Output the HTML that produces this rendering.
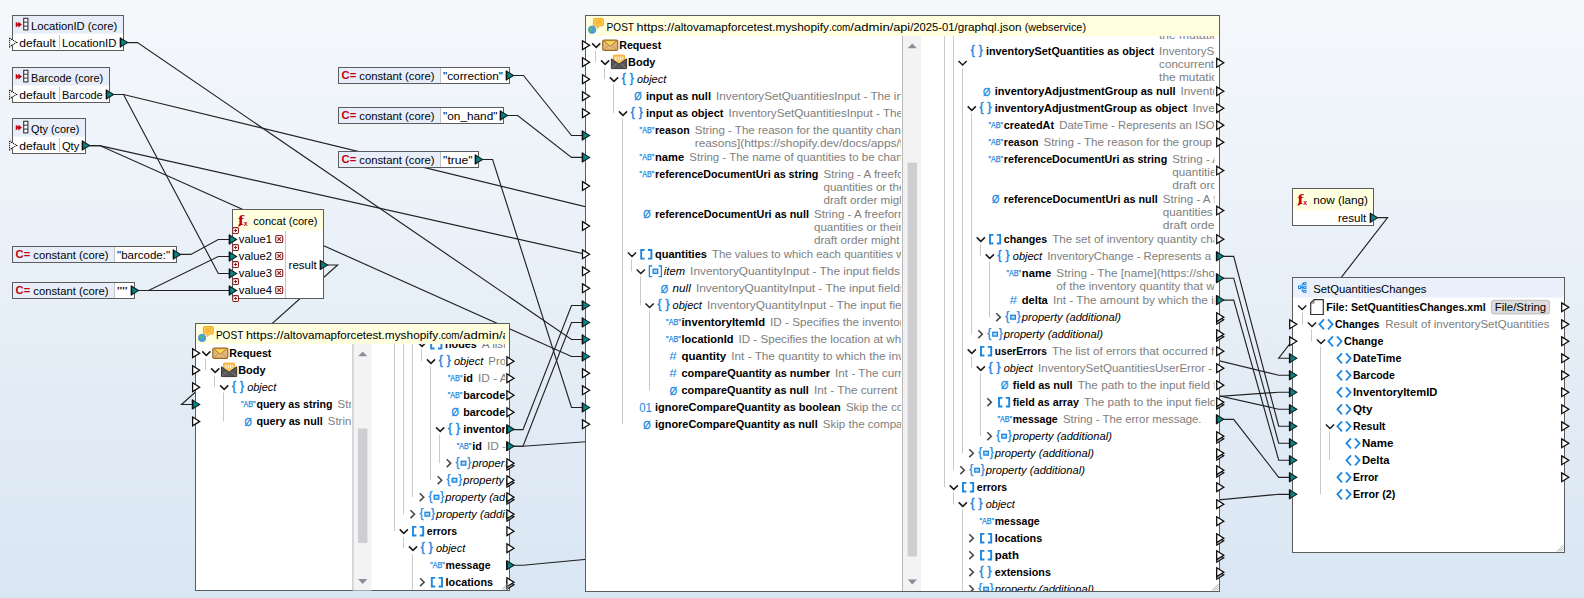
<!DOCTYPE html>
<html lang="en"><head><meta charset="utf-8"><title>MapForce mapping - SetQuantitiesChanges</title>
<style>html,body{margin:0;padding:0;background:#e6eef7;overflow:hidden}svg{display:block}svg{font-family:"Liberation Sans",Arial,sans-serif;font-size:11px}text{white-space:pre}.b{font-weight:bold}.i{font-style:italic}</style></head><body>
<svg width="1584" height="598" viewBox="0 0 1584 598">
<defs><linearGradient id="bg" x1="0" y1="0" x2="0" y2="1"><stop offset="0" stop-color="#f5f8fb"/><stop offset="1" stop-color="#d9e6f3"/></linearGradient>
<clipPath id="cMainL"><rect x="586" y="36" width="315" height="555"/></clipPath>
<clipPath id="cMainR"><rect x="921" y="36" width="293.4" height="555"/></clipPath>
<clipPath id="cMainR2"><rect x="921" y="36" width="298" height="555"/></clipPath>
<clipPath id="cW2L"><rect x="196" y="344" width="155" height="246"/></clipPath>
<clipPath id="cW2R"><rect x="371" y="344" width="134.2" height="246"/></clipPath>
<clipPath id="cW2T"><rect x="196" y="324" width="309" height="20"/></clipPath>
</defs>
<rect width="1584" height="598" fill="url(#bg)"/>
<g fill="none" stroke="#222" stroke-width="1.15">
<path d="M513.0 75.5H523.5L571.5 135.5H583.0"/>
<path d="M507.2 115.5H517.7L571.5 157.4H583.0"/>
<path d="M482.1 159.5H492.6L571.5 407.5H583.0"/>
<path d="M127.0 42.6H137.5L571.5 339.5H583.0"/>
<path d="M113.0 94.5H123.5L218.3 273.5H229.8"/>
<path d="M113.0 94.5H123.5L1278.7 375.2H1290.2"/>
<path d="M89.2 145.6H99.7L571.5 356.5H583.0"/>
<path d="M89.2 145.6H99.7L1278.7 409.2H1290.2"/>
<path d="M327.1 265.0H337.6L181.5 404.5H193.0"/>
<path d="M180.4 254.4H190.9L218.3 239.5H229.8"/>
<path d="M138.1 290.5H148.6L218.3 256.5H229.8"/>
<path d="M138.1 290.5H148.6L218.3 290.5H229.8"/>
<path d="M512.5 429.6H523.0L571.5 305.5H583.0"/>
<path d="M512.5 446.2H523.0L571.5 322.5H583.0"/>
<path d="M512.5 446.2H523.0L1278.7 392.2H1290.2"/>
<path d="M512.5 565.2H523.0L1278.7 494.3H1290.2"/>
<path d="M1377.1 217.6H1387.6L1278.7 358.2H1290.2"/>
<path d="M1223.2 256.3H1233.7L1278.7 426.2H1290.2"/>
<path d="M1223.2 278.2H1233.7L1278.7 443.2H1290.2"/>
<path d="M1223.2 300.1H1233.7L1278.7 460.2H1290.2"/>
<path d="M1223.2 419.3H1233.7L1278.7 477.3H1290.2"/>
</g>
<rect x="12.5" y="15.5" width="111" height="35" fill="#fff" stroke="#5c5c5c"/>
<rect x="13" y="16" width="110" height="17.6" fill="#e7eefa"/>
<path d="M59.5 35V49" stroke="#c4c4c4"/>
<path d="M16.1 22.2l2.7 2.4l-2.7 2.4zM18.6 22.2l2.9 2.4l-2.9 2.4z" fill="#c00010" stroke="#c00010" stroke-width="0.6"/>
<rect x="23.7" y="18.3" width="4.2" height="11.6" fill="#fff" stroke="#333" stroke-width="1.1"/>
<path d="M23.7 22.2h4.2M23.7 26.1h4.2" stroke="#333" stroke-width="1"/>
<text x="31.0" y="29.9" textLength="86.2" lengthAdjust="spacingAndGlyphs">LocationID (core)</text>
<path d="M9.6 38.1L16.7 42.4L9.6 46.7Z" fill="#fff" stroke="none"/>
<path d="M9.6 38.1L16.7 42.4L9.6 46.7V38.1" fill="none" stroke="#000" stroke-width="1.2" stroke-dasharray="1 1"/>
<text x="19.2" y="46.5" textLength="36.4" lengthAdjust="spacingAndGlyphs">default</text>
<text x="61.9" y="46.5" textLength="54.6" lengthAdjust="spacingAndGlyphs">LocationID</text>
<path d="M120.6 38.2L127.6 42.5L120.6 46.8Z" fill="#0a8585" stroke="#0c2424" stroke-width="1.1" stroke-linejoin="miter"/>
<path d="M120.4 37.7V47.3" stroke="#111" stroke-width="1.5"/>
<rect x="12.5" y="67.5" width="97" height="35" fill="#fff" stroke="#5c5c5c"/>
<rect x="13" y="68" width="96" height="17.6" fill="#e7eefa"/>
<path d="M59.5 87V101" stroke="#c4c4c4"/>
<path d="M16.1 74.2l2.7 2.4l-2.7 2.4zM18.6 74.2l2.9 2.4l-2.9 2.4z" fill="#c00010" stroke="#c00010" stroke-width="0.6"/>
<rect x="23.7" y="70.3" width="4.2" height="11.6" fill="#fff" stroke="#333" stroke-width="1.1"/>
<path d="M23.7 74.2h4.2M23.7 78.1h4.2" stroke="#333" stroke-width="1"/>
<text x="31.0" y="81.9" textLength="72.2" lengthAdjust="spacingAndGlyphs">Barcode (core)</text>
<path d="M9.6 90.1L16.7 94.4L9.6 98.7Z" fill="#fff" stroke="none"/>
<path d="M9.6 90.1L16.7 94.4L9.6 98.7V90.1" fill="none" stroke="#000" stroke-width="1.2" stroke-dasharray="1 1"/>
<text x="19.2" y="98.5" textLength="36.4" lengthAdjust="spacingAndGlyphs">default</text>
<text x="61.9" y="98.5" textLength="40.8" lengthAdjust="spacingAndGlyphs">Barcode</text>
<path d="M106.6 90.2L113.6 94.5L106.6 98.8Z" fill="#0a8585" stroke="#0c2424" stroke-width="1.1" stroke-linejoin="miter"/>
<path d="M106.4 89.7V99.3" stroke="#111" stroke-width="1.5"/>
<rect x="12.5" y="118.5" width="73" height="35" fill="#fff" stroke="#5c5c5c"/>
<rect x="13" y="119" width="72" height="17.6" fill="#e7eefa"/>
<path d="M59.5 138V152" stroke="#c4c4c4"/>
<path d="M16.1 125.2l2.7 2.4l-2.7 2.4zM18.6 125.2l2.9 2.4l-2.9 2.4z" fill="#c00010" stroke="#c00010" stroke-width="0.6"/>
<rect x="23.7" y="121.3" width="4.2" height="11.6" fill="#fff" stroke="#333" stroke-width="1.1"/>
<path d="M23.7 125.2h4.2M23.7 129.1h4.2" stroke="#333" stroke-width="1"/>
<text x="31.0" y="132.9" textLength="48.4" lengthAdjust="spacingAndGlyphs">Qty (core)</text>
<path d="M9.6 141.1L16.7 145.4L9.6 149.7Z" fill="#fff" stroke="none"/>
<path d="M9.6 141.1L16.7 145.4L9.6 149.7V141.1" fill="none" stroke="#000" stroke-width="1.2" stroke-dasharray="1 1"/>
<text x="19.2" y="149.5" textLength="36.4" lengthAdjust="spacingAndGlyphs">default</text>
<text x="61.9" y="149.5" textLength="17.4" lengthAdjust="spacingAndGlyphs">Qty</text>
<path d="M82.6 141.2L89.6 145.5L82.6 149.8Z" fill="#0a8585" stroke="#0c2424" stroke-width="1.1" stroke-linejoin="miter"/>
<path d="M82.4 140.7V150.3" stroke="#111" stroke-width="1.5"/>
<rect x="12.5" y="246.5" width="164" height="16" fill="#fff" stroke="#5c5c5c"/>
<rect x="13" y="247" width="101" height="15" fill="#e7eefa"/>
<path d="M114.5 247V262" stroke="#c4c4c4"/>
<text x="15.6" y="258.0" fill="#c00010" class="b" font-size="10.6" textLength="14.6" lengthAdjust="spacingAndGlyphs">C=</text>
<text x="33.3" y="258.6" textLength="75.2" lengthAdjust="spacingAndGlyphs">constant (core)</text>
<text x="117.1" y="258.6" textLength="52.9" lengthAdjust="spacingAndGlyphs">"barcode:"</text>
<path d="M173.6 250.2L180.6 254.5L173.6 258.8Z" fill="#0a8585" stroke="#0c2424" stroke-width="1.1" stroke-linejoin="miter"/>
<path d="M173.4 249.7V259.3" stroke="#111" stroke-width="1.5"/>
<rect x="12.5" y="282.5" width="122" height="16" fill="#fff" stroke="#5c5c5c"/>
<rect x="13" y="283" width="101" height="15" fill="#e7eefa"/>
<path d="M114.5 283V298" stroke="#c4c4c4"/>
<text x="15.6" y="294.0" fill="#c00010" class="b" font-size="10.6" textLength="14.6" lengthAdjust="spacingAndGlyphs">C=</text>
<text x="33.3" y="294.6" textLength="75.2" lengthAdjust="spacingAndGlyphs">constant (core)</text>
<text x="117.1" y="294.6" textLength="10.4" lengthAdjust="spacingAndGlyphs">""</text>
<path d="M131.6 286.2L138.6 290.5L131.6 294.8Z" fill="#0a8585" stroke="#0c2424" stroke-width="1.1" stroke-linejoin="miter"/>
<path d="M131.4 285.7V295.3" stroke="#111" stroke-width="1.5"/>
<rect x="338.5" y="67.5" width="171" height="16" fill="#fff" stroke="#5c5c5c"/>
<rect x="339" y="68" width="101" height="15" fill="#e7eefa"/>
<path d="M440.5 68V83" stroke="#c4c4c4"/>
<text x="341.6" y="79.0" fill="#c00010" class="b" font-size="10.6" textLength="14.6" lengthAdjust="spacingAndGlyphs">C=</text>
<text x="359.3" y="79.6" textLength="75.2" lengthAdjust="spacingAndGlyphs">constant (core)</text>
<text x="443.1" y="79.6" textLength="59.8" lengthAdjust="spacingAndGlyphs">"correction"</text>
<path d="M506.6 71.2L513.6 75.5L506.6 79.8Z" fill="#0a8585" stroke="#0c2424" stroke-width="1.1" stroke-linejoin="miter"/>
<path d="M506.4 70.7V80.3" stroke="#111" stroke-width="1.5"/>
<rect x="338.5" y="107.5" width="165" height="16" fill="#fff" stroke="#5c5c5c"/>
<rect x="339" y="108" width="101" height="15" fill="#e7eefa"/>
<path d="M440.5 108V123" stroke="#c4c4c4"/>
<text x="341.6" y="119.0" fill="#c00010" class="b" font-size="10.6" textLength="14.6" lengthAdjust="spacingAndGlyphs">C=</text>
<text x="359.3" y="119.6" textLength="75.2" lengthAdjust="spacingAndGlyphs">constant (core)</text>
<text x="443.1" y="119.6" textLength="54.3" lengthAdjust="spacingAndGlyphs">"on_hand"</text>
<path d="M500.6 111.2L507.6 115.5L500.6 119.8Z" fill="#0a8585" stroke="#0c2424" stroke-width="1.1" stroke-linejoin="miter"/>
<path d="M500.4 110.7V120.3" stroke="#111" stroke-width="1.5"/>
<rect x="338.5" y="151.5" width="140" height="16" fill="#fff" stroke="#5c5c5c"/>
<rect x="339" y="152" width="101" height="15" fill="#e7eefa"/>
<path d="M440.5 152V167" stroke="#c4c4c4"/>
<text x="341.6" y="163.0" fill="#c00010" class="b" font-size="10.6" textLength="14.6" lengthAdjust="spacingAndGlyphs">C=</text>
<text x="359.3" y="163.6" textLength="75.2" lengthAdjust="spacingAndGlyphs">constant (core)</text>
<text x="443.1" y="163.6" textLength="29.4" lengthAdjust="spacingAndGlyphs">"true"</text>
<path d="M475.6 155.2L482.6 159.5L475.6 163.8Z" fill="#0a8585" stroke="#0c2424" stroke-width="1.1" stroke-linejoin="miter"/>
<path d="M475.4 154.7V164.3" stroke="#111" stroke-width="1.5"/>
<rect x="232.5" y="209.5" width="91" height="89" fill="#fff" stroke="#5c5c5c"/>
<rect x="233" y="210" width="90" height="20.4" fill="#ffffdf"/>
<path d="M285.5 231V298" stroke="#c4c4c4"/>
<text x="238.0" y="224.6" fill="#c00010" font-family="Liberation Serif,serif" font-weight="bold" font-size="15.5" textLength="6.2" lengthAdjust="spacingAndGlyphs">f</text>
<path d="M240.8 224.0q-0.3 2 -2.4 1.7" fill="none" stroke="#c00010" stroke-width="1.5"/>
<text x="243.8" y="226.0" fill="#c00010" class="b" font-size="7.4" textLength="3.8" lengthAdjust="spacingAndGlyphs">x</text>
<text x="253.3" y="225.0" textLength="64.2" lengthAdjust="spacingAndGlyphs">concat (core)</text>
<text x="238.8" y="243.4" textLength="33.1" lengthAdjust="spacingAndGlyphs">value1</text>
<rect x="275.7" y="235.5" width="7" height="7" rx="1.3" fill="#fff" stroke="#8c1c1c" stroke-width="1.1"/>
<path d="M277.4 237.2l3.6 3.6M281.0 237.2l-3.6 3.6" stroke="#8c1c1c" stroke-width="1.1"/>
<path d="M229.6 235.2L236.6 239.5L229.6 243.8Z" fill="#0a8585" stroke="#0c2424" stroke-width="1.1" stroke-linejoin="miter"/>
<path d="M229.4 234.7V244.3" stroke="#111" stroke-width="1.5"/>
<text x="238.8" y="260.4" textLength="33.1" lengthAdjust="spacingAndGlyphs">value2</text>
<rect x="275.7" y="252.5" width="7" height="7" rx="1.3" fill="#fff" stroke="#8c1c1c" stroke-width="1.1"/>
<path d="M277.4 254.2l3.6 3.6M281.0 254.2l-3.6 3.6" stroke="#8c1c1c" stroke-width="1.1"/>
<path d="M229.6 252.2L236.6 256.5L229.6 260.8Z" fill="#0a8585" stroke="#0c2424" stroke-width="1.1" stroke-linejoin="miter"/>
<path d="M229.4 251.7V261.3" stroke="#111" stroke-width="1.5"/>
<text x="238.8" y="277.4" textLength="33.1" lengthAdjust="spacingAndGlyphs">value3</text>
<rect x="275.7" y="269.5" width="7" height="7" rx="1.3" fill="#fff" stroke="#8c1c1c" stroke-width="1.1"/>
<path d="M277.4 271.2l3.6 3.6M281.0 271.2l-3.6 3.6" stroke="#8c1c1c" stroke-width="1.1"/>
<path d="M229.6 269.2L236.6 273.5L229.6 277.8Z" fill="#0a8585" stroke="#0c2424" stroke-width="1.1" stroke-linejoin="miter"/>
<path d="M229.4 268.7V278.3" stroke="#111" stroke-width="1.5"/>
<text x="238.8" y="294.4" textLength="33.1" lengthAdjust="spacingAndGlyphs">value4</text>
<rect x="275.7" y="286.5" width="7" height="7" rx="1.3" fill="#fff" stroke="#8c1c1c" stroke-width="1.1"/>
<path d="M277.4 288.2l3.6 3.6M281.0 288.2l-3.6 3.6" stroke="#8c1c1c" stroke-width="1.1"/>
<path d="M229.6 286.2L236.6 290.5L229.6 294.8Z" fill="#0a8585" stroke="#0c2424" stroke-width="1.1" stroke-linejoin="miter"/>
<path d="M229.4 285.7V295.3" stroke="#111" stroke-width="1.5"/>
<rect x="232.7" y="227.6" width="5.8" height="5.8" rx="1.2" fill="#fff" stroke="#8c1c1c" stroke-width="1.05"/>
<path d="M234.1 230.5h3M235.6 229.0v3" stroke="#8c1c1c" stroke-width="1"/>
<rect x="232.7" y="244.6" width="5.8" height="5.8" rx="1.2" fill="#fff" stroke="#8c1c1c" stroke-width="1.05"/>
<path d="M234.1 247.5h3M235.6 246.0v3" stroke="#8c1c1c" stroke-width="1"/>
<rect x="232.7" y="261.6" width="5.8" height="5.8" rx="1.2" fill="#fff" stroke="#8c1c1c" stroke-width="1.05"/>
<path d="M234.1 264.5h3M235.6 263.0v3" stroke="#8c1c1c" stroke-width="1"/>
<rect x="232.7" y="278.6" width="5.8" height="5.8" rx="1.2" fill="#fff" stroke="#8c1c1c" stroke-width="1.05"/>
<path d="M234.1 281.5h3M235.6 280.0v3" stroke="#8c1c1c" stroke-width="1"/>
<rect x="232.7" y="295.6" width="5.8" height="5.8" rx="1.2" fill="#fff" stroke="#8c1c1c" stroke-width="1.05"/>
<path d="M234.1 298.5h3M235.6 297.0v3" stroke="#8c1c1c" stroke-width="1"/>
<text x="288.6" y="268.9" textLength="28.2" lengthAdjust="spacingAndGlyphs">result</text>
<path d="M320.6 260.7L327.6 265.0L320.6 269.3Z" fill="#0a8585" stroke="#0c2424" stroke-width="1.1" stroke-linejoin="miter"/>
<path d="M320.4 260.2V269.8" stroke="#111" stroke-width="1.5"/>
<rect x="1292.5" y="188.5" width="81" height="37" fill="#fff" stroke="#5c5c5c"/>
<rect x="1293" y="189" width="80" height="21.4" fill="#ffffdf"/>
<text x="1297.4" y="203.6" fill="#c00010" font-family="Liberation Serif,serif" font-weight="bold" font-size="15.5" textLength="6.2" lengthAdjust="spacingAndGlyphs">f</text>
<path d="M1300.2 203.0q-0.3 2 -2.4 1.7" fill="none" stroke="#c00010" stroke-width="1.5"/>
<text x="1303.2" y="205.0" fill="#c00010" class="b" font-size="7.4" textLength="3.8" lengthAdjust="spacingAndGlyphs">x</text>
<text x="1313.2" y="203.6" textLength="54.8" lengthAdjust="spacingAndGlyphs">now (lang)</text>
<text x="1338.0" y="221.9" textLength="28.2" lengthAdjust="spacingAndGlyphs">result</text>
<path d="M1370.6 213.5L1377.6 217.8L1370.6 222.1Z" fill="#0a8585" stroke="#0c2424" stroke-width="1.1" stroke-linejoin="miter"/>
<path d="M1370.4 213.0V222.6" stroke="#111" stroke-width="1.5"/>
<rect x="195.5" y="323.5" width="314" height="267" fill="#fff" stroke="#5c5c5c"/>
<rect x="196" y="324" width="313" height="19.8" fill="#ffffdf"/>
<path d="M204.6 326.6h7.6q1.2 0 1.2 1.2v5q0 1.2 -1.2 1.2h-2.4l-2.6 2.6v-2.6h-2.6q-1.2 0 -1.2 -1.2v-5q0 -1.2 1.2 -1.2z" fill="#fcc94a" stroke="#f0a020" stroke-width="0.9"/>
<path d="M205.6 329.0h5.6M205.6 331.2h5.6" stroke="#f0a020" stroke-width="0.9"/>
<circle cx="202.1" cy="337.9" r="3.7" fill="#4a9ee6" stroke="#3d86d0" stroke-width="0.7"/>
<path d="M200.3 336.4q1.4 -1.8 2.6 -0.5q-0.2 1.6 -1.4 2q0.5 1.6 -0.4 2.5q-1.7 -1.4 -0.8 -4z" fill="#5cc04e"/>
<path d="M203.8 337.3q1.3 0.5 0.9 2q-0.9 -0.2 -0.9 -2z" fill="#5cc04e"/>
<g clip-path="url(#cW2T)">
<text x="215.9" y="338.7" textLength="30.0" lengthAdjust="spacingAndGlyphs">POST </text>
<text x="245.9" y="338.7" textLength="37.6" lengthAdjust="spacingAndGlyphs">https://</text>
<text x="283.5" y="338.7" textLength="101.3" lengthAdjust="spacingAndGlyphs">altovamapforcetest.</text>
<text x="384.8" y="338.7" textLength="53.4" lengthAdjust="spacingAndGlyphs">myshopify</text>
<text x="438.2" y="338.7" textLength="21.4" lengthAdjust="spacingAndGlyphs">.com</text>
<text x="459.6" y="338.7" textLength="39.4" lengthAdjust="spacingAndGlyphs">/admin</text>
<text x="499.0" y="338.7" textLength="20.5" lengthAdjust="spacingAndGlyphs">/api</text>
<text x="519.5" y="338.7" textLength="44.2" lengthAdjust="spacingAndGlyphs">/2025-01</text>
<text x="563.7" y="338.7" textLength="70.3" lengthAdjust="spacingAndGlyphs">/graphql.json </text>
<text x="634.0" y="338.7" textLength="61.3" lengthAdjust="spacingAndGlyphs">(webservice)</text>
</g>
<rect x="352.9" y="344" width="18.5" height="246.5" fill="#f3f3f3"/>
<path d="M352.9 344V590.5" stroke="#b9b9b9" stroke-width="1"/>
<rect x="358" y="428.5" width="9.4" height="114.5" fill="#cdcdd2"/>
<path d="M358.1 356.2l4.6 -4.8l4.6 4.8z" fill="#8a8e9c"/>
<path d="M358.1 579.1l4.6 4.8l4.6 -4.8z" fill="#8a8e9c"/>
<g clip-path="url(#cW2L)">
<path d="M205.5 358.5V370.0" stroke="#c9c9c9" stroke-width="1"/>
<path d="M214.5 375.5V387.0" stroke="#c9c9c9" stroke-width="1"/>
<path d="M223.5 392.5V421.4" stroke="#c9c9c9" stroke-width="1"/>
<path d="M202.2 351.4l4.1 4l4.1 -4" fill="none" stroke="#1a1a1a" stroke-width="1.5"/>
<rect x="212.8" y="348.0" width="15" height="10.4" rx="1.4" fill="#e3b878" stroke="#9c6a24" stroke-width="1.2"/>
<path d="M213.5 348.6h13.6l-6.8 5.6z" fill="#f8d858" stroke="#a8722c" stroke-width="0.9" stroke-linejoin="round"/>
<path d="M213.7 357.6l4.6 -3.8M226.9 357.6l-4.6 -3.8" fill="none" stroke="#b98848" stroke-width="0.8"/>
<text x="229.3" y="357.1" class="b" textLength="42.1" lengthAdjust="spacingAndGlyphs">Request</text>
<path d="M211.1 368.4l4.1 4l4.1 -4" fill="none" stroke="#1a1a1a" stroke-width="1.5"/>
<rect x="223.5" y="363.1" width="11.2" height="8.4" rx="0.8" fill="#f6c566" stroke="#efa52e" stroke-width="0.9"/>
<path d="M226.0 365.0v3.6M228.4 365.6v2.2M230.6 365.0v3.6M232.6 365.2v1.6" stroke="#fff6dc" stroke-width="1.1"/>
<path d="M221.5 366.8v9.8h15.2v-9.8l-7.6 5.4z" fill="#565656" stroke="#2e2e2e" stroke-width="0.9"/>
<path d="M221.9 376.2l5 -4.4M236.3 376.2l-5 -4.4" fill="none" stroke="#8e8e8e" stroke-width="0.8"/>
<text x="238.2" y="374.1" class="b" textLength="27.3" lengthAdjust="spacingAndGlyphs">Body</text>
<path d="M220.1 385.4l4.1 4l4.1 -4" fill="none" stroke="#1a1a1a" stroke-width="1.5"/>
<text x="232.0" y="390.2" fill="#1b87e0" font-size="12" textLength="12" lengthAdjust="spacing" stroke="#1b87e0" stroke-width="0.45">{ }</text>
<text x="247.2" y="391.1" class="i" textLength="29.2" lengthAdjust="spacingAndGlyphs">object</text>
<text x="241.0" y="407.4" fill="#1b87e0" font-size="8.4" textLength="14.6" lengthAdjust="spacingAndGlyphs" stroke="#1b87e0" stroke-width="0.25">"AB"</text>
<text x="256.4" y="408.3" class="b" textLength="76.1" lengthAdjust="spacingAndGlyphs">query as string</text>
<text x="337.6" y="408.3" fill="#7e7e7e" textLength="140.9" lengthAdjust="spacingAndGlyphs">String - The GraphQL query</text>
<text x="244.6" y="425.6" fill="#1b87e0" font-size="11.6" textLength="7.4" lengthAdjust="spacingAndGlyphs" stroke="#1b87e0" stroke-width="0.3">Ø</text>
<text x="256.4" y="425.3" class="b" textLength="66.3" lengthAdjust="spacingAndGlyphs">query as null</text>
<text x="327.8" y="425.3" fill="#7e7e7e" textLength="140.9" lengthAdjust="spacingAndGlyphs">String - The GraphQL query</text>
</g>
<g clip-path="url(#cW2R)">
<path d="M394.5 344.0V531.2" stroke="#c9c9c9" stroke-width="1"/>
<path d="M403.5 344.0V514.2" stroke="#c9c9c9" stroke-width="1"/>
<path d="M412.5 344.0V497.2" stroke="#c9c9c9" stroke-width="1"/>
<path d="M421.5 349.0V361.2" stroke="#c9c9c9" stroke-width="1"/>
<path d="M430.5 366.5V480.2" stroke="#c9c9c9" stroke-width="1"/>
<path d="M439.5 434.5V463.2" stroke="#c9c9c9" stroke-width="1"/>
<path d="M403.5 537.0V548.2" stroke="#c9c9c9" stroke-width="1"/>
<path d="M412.5 554.0V591.0" stroke="#c9c9c9" stroke-width="1"/>
<path d="M417.9 342.4l4.1 4l4.1 -4" fill="none" stroke="#1a1a1a" stroke-width="1.5"/>
<path d="M434.6 339.9h-3.4v8.6h3.4M438.0 339.9h3.4v8.6h-3.4" fill="none" stroke="#1b87e0" stroke-width="1.9"/>
<text x="445.0" y="348.1" class="b" textLength="31.7" lengthAdjust="spacingAndGlyphs">nodes</text>
<text x="481.7" y="348.1" fill="#7e7e7e" textLength="73.1" lengthAdjust="spacingAndGlyphs">A list of nodes</text>
<path d="M426.9 359.4l4.1 4l4.1 -4" fill="none" stroke="#1a1a1a" stroke-width="1.5"/>
<text x="438.8" y="364.2" fill="#1b87e0" font-size="12" textLength="12" lengthAdjust="spacing" stroke="#1b87e0" stroke-width="0.45">{ }</text>
<text x="454.0" y="365.1" class="i" textLength="29.2" lengthAdjust="spacingAndGlyphs">object</text>
<text x="488.3" y="365.1" fill="#7e7e7e" textLength="143.7" lengthAdjust="spacingAndGlyphs">ProductVariant - Represents</text>
<text x="447.8" y="381.2" fill="#1b87e0" font-size="8.4" textLength="14.6" lengthAdjust="spacingAndGlyphs" stroke="#1b87e0" stroke-width="0.25">"AB"</text>
<text x="463.2" y="382.1" class="b" textLength="9.7" lengthAdjust="spacingAndGlyphs">id</text>
<text x="478.0" y="382.1" fill="#7e7e7e" textLength="127.6" lengthAdjust="spacingAndGlyphs">ID - A globally-unique ID</text>
<text x="447.8" y="398.2" fill="#1b87e0" font-size="8.4" textLength="14.6" lengthAdjust="spacingAndGlyphs" stroke="#1b87e0" stroke-width="0.25">"AB"</text>
<text x="463.2" y="399.1" class="b" textLength="89.9" lengthAdjust="spacingAndGlyphs">barcode as string</text>
<text x="451.4" y="416.4" fill="#1b87e0" font-size="11.6" textLength="7.4" lengthAdjust="spacingAndGlyphs" stroke="#1b87e0" stroke-width="0.3">Ø</text>
<text x="463.2" y="416.1" class="b" textLength="79.1" lengthAdjust="spacingAndGlyphs">barcode as null</text>
<path d="M436.1 427.4l4.1 4l4.1 -4" fill="none" stroke="#1a1a1a" stroke-width="1.5"/>
<text x="448.0" y="432.2" fill="#1b87e0" font-size="12" textLength="12" lengthAdjust="spacing" stroke="#1b87e0" stroke-width="0.45">{ }</text>
<text x="463.2" y="433.1" class="b" textLength="70.7" lengthAdjust="spacingAndGlyphs">inventoryItem</text>
<text x="456.8" y="449.2" fill="#1b87e0" font-size="8.4" textLength="14.6" lengthAdjust="spacingAndGlyphs" stroke="#1b87e0" stroke-width="0.25">"AB"</text>
<text x="472.2" y="450.1" class="b" textLength="9.7" lengthAdjust="spacingAndGlyphs">id</text>
<text x="487.0" y="450.1" fill="#7e7e7e" textLength="127.6" lengthAdjust="spacingAndGlyphs">ID - A globally-unique ID</text>
<path d="M446.7 459.3l4 3.9l-4 3.9" fill="none" stroke="#4a4a4a" stroke-width="1.6"/>
<text x="455.6" y="466.3" fill="#1b87e0" font-size="12" textLength="15.6" lengthAdjust="spacing" stroke="#1b87e0" stroke-width="0.25">{ }</text>
<rect x="461.2" y="461.3" width="4.6" height="3.8" fill="#b4d8f6" stroke="#1b87e0" stroke-width="1.3"/>
<text x="472.2" y="467.1" class="i" textLength="99.1" lengthAdjust="spacingAndGlyphs">property (additional)</text>
<path d="M437.7 476.3l4 3.9l-4 3.9" fill="none" stroke="#4a4a4a" stroke-width="1.6"/>
<text x="446.6" y="483.3" fill="#1b87e0" font-size="12" textLength="15.6" lengthAdjust="spacing" stroke="#1b87e0" stroke-width="0.25">{ }</text>
<rect x="452.2" y="478.3" width="4.6" height="3.8" fill="#b4d8f6" stroke="#1b87e0" stroke-width="1.3"/>
<text x="463.2" y="484.1" class="i" textLength="99.1" lengthAdjust="spacingAndGlyphs">property (additional)</text>
<path d="M419.7 493.3l4 3.9l-4 3.9" fill="none" stroke="#4a4a4a" stroke-width="1.6"/>
<text x="428.6" y="500.3" fill="#1b87e0" font-size="12" textLength="15.6" lengthAdjust="spacing" stroke="#1b87e0" stroke-width="0.25">{ }</text>
<rect x="434.2" y="495.3" width="4.6" height="3.8" fill="#b4d8f6" stroke="#1b87e0" stroke-width="1.3"/>
<text x="445.2" y="501.1" class="i" textLength="99.1" lengthAdjust="spacingAndGlyphs">property (additional)</text>
<path d="M410.5 510.3l4 3.9l-4 3.9" fill="none" stroke="#4a4a4a" stroke-width="1.6"/>
<text x="419.4" y="517.3" fill="#1b87e0" font-size="12" textLength="15.6" lengthAdjust="spacing" stroke="#1b87e0" stroke-width="0.25">{ }</text>
<rect x="425.0" y="512.3" width="4.6" height="3.8" fill="#b4d8f6" stroke="#1b87e0" stroke-width="1.3"/>
<text x="436.0" y="518.1" class="i" textLength="99.1" lengthAdjust="spacingAndGlyphs">property (additional)</text>
<path d="M399.7 529.4l4.1 4l4.1 -4" fill="none" stroke="#1a1a1a" stroke-width="1.5"/>
<path d="M416.4 526.9h-3.4v8.6h3.4M419.8 526.9h3.4v8.6h-3.4" fill="none" stroke="#1b87e0" stroke-width="1.9"/>
<text x="426.8" y="535.1" class="b" textLength="30.3" lengthAdjust="spacingAndGlyphs">errors</text>
<path d="M408.9 546.4l4.1 4l4.1 -4" fill="none" stroke="#1a1a1a" stroke-width="1.5"/>
<text x="420.8" y="551.2" fill="#1b87e0" font-size="12" textLength="12" lengthAdjust="spacing" stroke="#1b87e0" stroke-width="0.45">{ }</text>
<text x="436.0" y="552.1" class="i" textLength="29.2" lengthAdjust="spacingAndGlyphs">object</text>
<text x="430.2" y="568.2" fill="#1b87e0" font-size="8.4" textLength="14.6" lengthAdjust="spacingAndGlyphs" stroke="#1b87e0" stroke-width="0.25">"AB"</text>
<text x="445.6" y="569.1" class="b" textLength="44.9" lengthAdjust="spacingAndGlyphs">message</text>
<path d="M420.1 578.3l4 3.9l-4 3.9" fill="none" stroke="#4a4a4a" stroke-width="1.6"/>
<path d="M435.2 577.9h-3.4v8.6h3.4M438.6 577.9h3.4v8.6h-3.4" fill="none" stroke="#1b87e0" stroke-width="1.9"/>
<text x="445.6" y="586.1" class="b" textLength="47.4" lengthAdjust="spacingAndGlyphs">locations</text>
</g>
<path d="M192.6 348.8L199.7 353.2L192.6 357.6Z" fill="#fff" stroke="#0a0a0a" stroke-width="1.25"/>
<path d="M192.6 365.8L199.7 370.2L192.6 374.6Z" fill="#fff" stroke="#0a0a0a" stroke-width="1.25"/>
<path d="M192.6 382.8L199.7 387.2L192.6 391.6Z" fill="#fff" stroke="#0a0a0a" stroke-width="1.25"/>
<path d="M192.6 417.0L199.7 421.4L192.6 425.8Z" fill="#fff" stroke="#0a0a0a" stroke-width="1.25"/>
<path d="M192.7 400.1L199.7 404.4L192.7 408.7Z" fill="#0a8585" stroke="#0c2424" stroke-width="1.1" stroke-linejoin="miter"/>
<path d="M192.5 399.6V409.2" stroke="#111" stroke-width="1.5"/>
<path d="M506.9 356.8L514.0 361.2L506.9 365.6Z" fill="#fff" stroke="#0a0a0a" stroke-width="1.25"/>
<path d="M506.9 373.8L514.0 378.2L506.9 382.6Z" fill="#fff" stroke="#0a0a0a" stroke-width="1.25"/>
<path d="M506.9 390.8L514.0 395.2L506.9 399.6Z" fill="#fff" stroke="#0a0a0a" stroke-width="1.25"/>
<path d="M506.9 407.8L514.0 412.2L506.9 416.6Z" fill="#fff" stroke="#0a0a0a" stroke-width="1.25"/>
<path d="M507.0 424.9L514.0 429.2L507.0 433.5Z" fill="#0a8585" stroke="#0c2424" stroke-width="1.1" stroke-linejoin="miter"/>
<path d="M506.8 424.4V434.0" stroke="#111" stroke-width="1.5"/>
<path d="M507.0 441.9L514.0 446.2L507.0 450.5Z" fill="#0a8585" stroke="#0c2424" stroke-width="1.1" stroke-linejoin="miter"/>
<path d="M506.8 441.4V451.0" stroke="#111" stroke-width="1.5"/>
<path d="M506.9 461.8L514.0 465.8L506.9 470.2Z" fill="#c4c4c4" stroke="#111" stroke-width="1.15"/>
<path d="M506.9 458.8L514.0 463.2L506.9 467.6Z" fill="#fff" stroke="#0a0a0a" stroke-width="1.25"/>
<path d="M506.9 478.8L514.0 482.8L506.9 487.2Z" fill="#c4c4c4" stroke="#111" stroke-width="1.15"/>
<path d="M506.9 475.8L514.0 480.2L506.9 484.6Z" fill="#fff" stroke="#0a0a0a" stroke-width="1.25"/>
<path d="M506.9 495.8L514.0 499.8L506.9 504.2Z" fill="#c4c4c4" stroke="#111" stroke-width="1.15"/>
<path d="M506.9 492.8L514.0 497.2L506.9 501.6Z" fill="#fff" stroke="#0a0a0a" stroke-width="1.25"/>
<path d="M506.9 512.8L514.0 516.8L506.9 521.2Z" fill="#c4c4c4" stroke="#111" stroke-width="1.15"/>
<path d="M506.9 509.8L514.0 514.2L506.9 518.6Z" fill="#fff" stroke="#0a0a0a" stroke-width="1.25"/>
<path d="M506.9 526.8L514.0 531.2L506.9 535.6Z" fill="#fff" stroke="#0a0a0a" stroke-width="1.25"/>
<path d="M506.9 543.8L514.0 548.2L506.9 552.6Z" fill="#fff" stroke="#0a0a0a" stroke-width="1.25"/>
<path d="M507.0 560.9L514.0 565.2L507.0 569.5Z" fill="#0a8585" stroke="#0c2424" stroke-width="1.1" stroke-linejoin="miter"/>
<path d="M506.8 560.4V570.0" stroke="#111" stroke-width="1.5"/>
<path d="M506.9 580.8L514.0 584.8L506.9 589.2Z" fill="#c4c4c4" stroke="#111" stroke-width="1.15"/>
<path d="M506.9 577.8L514.0 582.2L506.9 586.6Z" fill="#fff" stroke="#0a0a0a" stroke-width="1.25"/>
<path d="M502.1 589.5l6.4 -6.4M504.3 589.5l4.2 -4.2M506.5 589.5l2 -2" stroke="#a2a2a2" stroke-width="0.9"/>
<rect x="585.5" y="15.5" width="634" height="576" fill="#fff" stroke="#5c5c5c"/>
<rect x="586" y="16" width="633" height="20" fill="#ffffdf"/>
<path d="M594.6 18.4h7.6q1.2 0 1.2 1.2v5q0 1.2 -1.2 1.2h-2.4l-2.6 2.6v-2.6h-2.6q-1.2 0 -1.2 -1.2v-5q0 -1.2 1.2 -1.2z" fill="#fcc94a" stroke="#f0a020" stroke-width="0.9"/>
<path d="M595.6 20.8h5.6M595.6 23.0h5.6" stroke="#f0a020" stroke-width="0.9"/>
<circle cx="592.1" cy="29.7" r="3.7" fill="#4a9ee6" stroke="#3d86d0" stroke-width="0.7"/>
<path d="M590.3 28.2q1.4 -1.8 2.6 -0.5q-0.2 1.6 -1.4 2q0.5 1.6 -0.4 2.5q-1.7 -1.4 -0.8 -4z" fill="#5cc04e"/>
<path d="M593.8 29.1q1.3 0.5 0.9 2q-0.9 -0.2 -0.9 -2z" fill="#5cc04e"/>
<text x="606.6" y="30.5" textLength="30.0" lengthAdjust="spacingAndGlyphs">POST </text>
<text x="636.6" y="30.5" textLength="37.6" lengthAdjust="spacingAndGlyphs">https://</text>
<text x="674.2" y="30.5" textLength="101.3" lengthAdjust="spacingAndGlyphs">altovamapforcetest.</text>
<text x="775.5" y="30.5" textLength="53.4" lengthAdjust="spacingAndGlyphs">myshopify</text>
<text x="828.9" y="30.5" textLength="21.4" lengthAdjust="spacingAndGlyphs">.com</text>
<text x="850.3" y="30.5" textLength="39.4" lengthAdjust="spacingAndGlyphs">/admin</text>
<text x="889.7" y="30.5" textLength="20.5" lengthAdjust="spacingAndGlyphs">/api</text>
<text x="910.2" y="30.5" textLength="44.2" lengthAdjust="spacingAndGlyphs">/2025-01</text>
<text x="954.4" y="30.5" textLength="70.3" lengthAdjust="spacingAndGlyphs">/graphql.json </text>
<text x="1024.7" y="30.5" textLength="61.3" lengthAdjust="spacingAndGlyphs">(webservice)</text>
<rect x="902.5" y="36" width="18.5" height="555" fill="#f3f3f3"/>
<path d="M902.5 36V591" stroke="#b9b9b9" stroke-width="1"/>
<rect x="907.6" y="162.6" width="9.4" height="393.8" fill="#cdcdd2"/>
<path d="M907.7 48.2l4.6 -4.8l4.6 4.8z" fill="#8a8e9c"/>
<path d="M907.7 579.6l4.6 4.8l4.6 -4.8z" fill="#8a8e9c"/>
<g clip-path="url(#cMainL)">
<path d="M595.5 50.5V62.2" stroke="#c9c9c9" stroke-width="1"/>
<path d="M604.5 67.5V79.2" stroke="#c9c9c9" stroke-width="1"/>
<path d="M613.5 84.5V113.2" stroke="#c9c9c9" stroke-width="1"/>
<path d="M622.5 118.5V424.3" stroke="#c9c9c9" stroke-width="1"/>
<path d="M631.5 259.5V271.3" stroke="#c9c9c9" stroke-width="1"/>
<path d="M640.5 276.5V305.3" stroke="#c9c9c9" stroke-width="1"/>
<path d="M649.5 310.5V390.3" stroke="#c9c9c9" stroke-width="1"/>
<path d="M592.1 43.4l4.1 4l4.1 -4" fill="none" stroke="#1a1a1a" stroke-width="1.5"/>
<rect x="602.7" y="40.0" width="15" height="10.4" rx="1.4" fill="#e3b878" stroke="#9c6a24" stroke-width="1.2"/>
<path d="M603.4 40.6h13.6l-6.8 5.6z" fill="#f8d858" stroke="#a8722c" stroke-width="0.9" stroke-linejoin="round"/>
<path d="M603.6 49.6l4.6 -3.8M616.8 49.6l-4.6 -3.8" fill="none" stroke="#b98848" stroke-width="0.8"/>
<text x="619.2" y="49.1" class="b" textLength="42.1" lengthAdjust="spacingAndGlyphs">Request</text>
<path d="M601.0 60.4l4.1 4l4.1 -4" fill="none" stroke="#1a1a1a" stroke-width="1.5"/>
<rect x="613.4" y="55.1" width="11.2" height="8.4" rx="0.8" fill="#f6c566" stroke="#efa52e" stroke-width="0.9"/>
<path d="M615.9 57.0v3.6M618.3 57.6v2.2M620.5 57.0v3.6M622.5 57.2v1.6" stroke="#fff6dc" stroke-width="1.1"/>
<path d="M611.4 58.8v9.8h15.2v-9.8l-7.6 5.4z" fill="#565656" stroke="#2e2e2e" stroke-width="0.9"/>
<path d="M611.8 68.2l5 -4.4M626.2 68.2l-5 -4.4" fill="none" stroke="#8e8e8e" stroke-width="0.8"/>
<text x="628.1" y="66.1" class="b" textLength="27.3" lengthAdjust="spacingAndGlyphs">Body</text>
<path d="M609.9 77.4l4.1 4l4.1 -4" fill="none" stroke="#1a1a1a" stroke-width="1.5"/>
<text x="621.8" y="82.2" fill="#1b87e0" font-size="12" textLength="12" lengthAdjust="spacing" stroke="#1b87e0" stroke-width="0.45">{ }</text>
<text x="637.0" y="83.1" class="i" textLength="29.2" lengthAdjust="spacingAndGlyphs">object</text>
<text x="634.2" y="100.4" fill="#1b87e0" font-size="11.6" textLength="7.4" lengthAdjust="spacingAndGlyphs" stroke="#1b87e0" stroke-width="0.3">Ø</text>
<text x="646.0" y="100.1" class="b" textLength="65.0" lengthAdjust="spacingAndGlyphs">input as null</text>
<text x="716.1" y="100.1" fill="#7e7e7e" textLength="418.7" lengthAdjust="spacingAndGlyphs">InventorySetQuantitiesInput - The input fields required to set inventory quantities.</text>
<path d="M618.9 111.4l4.1 4l4.1 -4" fill="none" stroke="#1a1a1a" stroke-width="1.5"/>
<text x="630.8" y="116.2" fill="#1b87e0" font-size="12" textLength="12" lengthAdjust="spacing" stroke="#1b87e0" stroke-width="0.45">{ }</text>
<text x="646.0" y="117.1" class="b" textLength="77.5" lengthAdjust="spacingAndGlyphs">input as object</text>
<text x="728.6" y="117.1" fill="#7e7e7e" textLength="418.7" lengthAdjust="spacingAndGlyphs">InventorySetQuantitiesInput - The input fields required to set inventory quantities.</text>
<text x="639.6" y="133.4" fill="#1b87e0" font-size="8.4" textLength="14.6" lengthAdjust="spacingAndGlyphs" stroke="#1b87e0" stroke-width="0.25">"AB"</text>
<text x="655.0" y="134.3" class="b" textLength="34.6" lengthAdjust="spacingAndGlyphs">reason</text>
<text x="694.7" y="134.3" fill="#7e7e7e" textLength="429.1" lengthAdjust="spacingAndGlyphs">String - The reason for the quantity changes. The value must be one of the [possible</text>
<text x="694.7" y="147.3" fill="#7e7e7e" textLength="416.3" lengthAdjust="spacingAndGlyphs">reasons](https://shopify.dev/docs/apps/fulfillment/inventory-management-apps#</text>
<text x="639.6" y="160.3" fill="#1b87e0" font-size="8.4" textLength="14.6" lengthAdjust="spacingAndGlyphs" stroke="#1b87e0" stroke-width="0.25">"AB"</text>
<text x="655.0" y="161.2" class="b" textLength="29.2" lengthAdjust="spacingAndGlyphs">name</text>
<text x="689.3" y="161.2" fill="#7e7e7e" textLength="391.5" lengthAdjust="spacingAndGlyphs">String - The name of quantities to be changed. The only accepted values are:</text>
<text x="639.6" y="177.3" fill="#1b87e0" font-size="8.4" textLength="14.6" lengthAdjust="spacingAndGlyphs" stroke="#1b87e0" stroke-width="0.25">"AB"</text>
<text x="655.0" y="178.2" class="b" textLength="163.4" lengthAdjust="spacingAndGlyphs">referenceDocumentUri as string</text>
<text x="823.5" y="178.2" fill="#7e7e7e" textLength="240.9" lengthAdjust="spacingAndGlyphs">String - A freeform URI that represents why the</text>
<text x="823.5" y="191.2" fill="#7e7e7e" textLength="315.2" lengthAdjust="spacingAndGlyphs">quantities or their reference document were changed, such as</text>
<text x="823.5" y="204.2" fill="#7e7e7e" textLength="174.3" lengthAdjust="spacingAndGlyphs">draft order might have caused the</text>
<text x="643.2" y="218.1" fill="#1b87e0" font-size="11.6" textLength="7.4" lengthAdjust="spacingAndGlyphs" stroke="#1b87e0" stroke-width="0.3">Ø</text>
<text x="655.0" y="217.8" class="b" textLength="153.9" lengthAdjust="spacingAndGlyphs">referenceDocumentUri as null</text>
<text x="814.0" y="217.8" fill="#7e7e7e" textLength="240.9" lengthAdjust="spacingAndGlyphs">String - A freeform URI that represents why the</text>
<text x="814.0" y="230.8" fill="#7e7e7e" textLength="315.2" lengthAdjust="spacingAndGlyphs">quantities or their reference document were changed, such as</text>
<text x="814.0" y="243.8" fill="#7e7e7e" textLength="174.3" lengthAdjust="spacingAndGlyphs">draft order might have caused the</text>
<path d="M627.9 252.5l4.1 4l4.1 -4" fill="none" stroke="#1a1a1a" stroke-width="1.5"/>
<path d="M644.6 250.0h-3.4v8.6h3.4M648.0 250.0h3.4v8.6h-3.4" fill="none" stroke="#1b87e0" stroke-width="1.9"/>
<text x="655.0" y="258.2" class="b" textLength="51.9" lengthAdjust="spacingAndGlyphs">quantities</text>
<text x="712.0" y="258.2" fill="#7e7e7e" textLength="237.6" lengthAdjust="spacingAndGlyphs">The values to which each quantities will be set.</text>
<path d="M636.7 269.5l4.1 4l4.1 -4" fill="none" stroke="#1a1a1a" stroke-width="1.5"/>
<path d="M652.2 266.0h-2.8v10.6h2.8M658.6 266.0h2.8v10.6h-2.8" fill="none" stroke="#1b87e0" stroke-width="1.3"/>
<rect x="653.1" y="269.2" width="4.6" height="4.2" fill="#b4d8f6" stroke="#1b87e0" stroke-width="1.3"/>
<text x="663.8" y="275.2" class="i" textLength="21.2" lengthAdjust="spacingAndGlyphs">item</text>
<text x="690.1" y="275.2" fill="#7e7e7e" textLength="291.5" lengthAdjust="spacingAndGlyphs">InventoryQuantityInput - The input fields for the quantity</text>
<text x="660.8" y="292.5" fill="#1b87e0" font-size="11.6" textLength="7.4" lengthAdjust="spacingAndGlyphs" stroke="#1b87e0" stroke-width="0.3">Ø</text>
<text x="672.6" y="292.2" class="i" textLength="18.2" lengthAdjust="spacingAndGlyphs">null</text>
<text x="695.9" y="292.2" fill="#7e7e7e" textLength="291.5" lengthAdjust="spacingAndGlyphs">InventoryQuantityInput - The input fields for the quantity</text>
<path d="M645.5 303.5l4.1 4l4.1 -4" fill="none" stroke="#1a1a1a" stroke-width="1.5"/>
<text x="657.4" y="308.3" fill="#1b87e0" font-size="12" textLength="12" lengthAdjust="spacing" stroke="#1b87e0" stroke-width="0.45">{ }</text>
<text x="672.6" y="309.2" class="i" textLength="29.3" lengthAdjust="spacingAndGlyphs">object</text>
<text x="707.0" y="309.2" fill="#7e7e7e" textLength="291.5" lengthAdjust="spacingAndGlyphs">InventoryQuantityInput - The input fields for the quantity</text>
<text x="666.1" y="325.3" fill="#1b87e0" font-size="8.4" textLength="14.6" lengthAdjust="spacingAndGlyphs" stroke="#1b87e0" stroke-width="0.25">"AB"</text>
<text x="681.5" y="326.2" class="b" textLength="83.5" lengthAdjust="spacingAndGlyphs">inventoryItemId</text>
<text x="770.1" y="326.2" fill="#7e7e7e" textLength="332.0" lengthAdjust="spacingAndGlyphs">ID - Specifies the inventory item to which the quantity will be set.</text>
<text x="666.1" y="342.3" fill="#1b87e0" font-size="8.4" textLength="14.6" lengthAdjust="spacingAndGlyphs" stroke="#1b87e0" stroke-width="0.25">"AB"</text>
<text x="681.5" y="343.2" class="b" textLength="51.9" lengthAdjust="spacingAndGlyphs">locationId</text>
<text x="738.5" y="343.2" fill="#7e7e7e" textLength="298.2" lengthAdjust="spacingAndGlyphs">ID - Specifies the location at which the quantity will be set.</text>
<text x="669.3" y="360.3" fill="#1b87e0" font-size="11.5" textLength="7.6" lengthAdjust="spacingAndGlyphs">#</text>
<text x="681.5" y="360.2" class="b" textLength="44.7" lengthAdjust="spacingAndGlyphs">quantity</text>
<text x="731.3" y="360.2" fill="#7e7e7e" textLength="308.0" lengthAdjust="spacingAndGlyphs">Int - The quantity to which the inventory quantity will be set.</text>
<text x="669.3" y="377.3" fill="#1b87e0" font-size="11.5" textLength="7.6" lengthAdjust="spacingAndGlyphs">#</text>
<text x="681.5" y="377.2" class="b" textLength="148.5" lengthAdjust="spacingAndGlyphs">compareQuantity as number</text>
<text x="835.1" y="377.2" fill="#7e7e7e" textLength="370.3" lengthAdjust="spacingAndGlyphs">Int - The current quantity to be compared against the persisted quantity.</text>
<text x="669.7" y="394.5" fill="#1b87e0" font-size="11.6" textLength="7.4" lengthAdjust="spacingAndGlyphs" stroke="#1b87e0" stroke-width="0.3">Ø</text>
<text x="681.5" y="394.2" class="b" textLength="127.4" lengthAdjust="spacingAndGlyphs">compareQuantity as null</text>
<text x="814.0" y="394.2" fill="#7e7e7e" textLength="370.3" lengthAdjust="spacingAndGlyphs">Int - The current quantity to be compared against the persisted quantity.</text>
<text x="639.2" y="411.9" fill="#1b87e0" font-size="13" textLength="12.8" lengthAdjust="spacingAndGlyphs">01</text>
<text x="655.0" y="411.2" class="b" textLength="185.8" lengthAdjust="spacingAndGlyphs">ignoreCompareQuantity as boolean</text>
<text x="845.9" y="411.2" fill="#7e7e7e" textLength="266.1" lengthAdjust="spacingAndGlyphs">Skip the compare quantity check in situations where</text>
<text x="643.2" y="428.5" fill="#1b87e0" font-size="11.6" textLength="7.4" lengthAdjust="spacingAndGlyphs" stroke="#1b87e0" stroke-width="0.3">Ø</text>
<text x="655.0" y="428.2" class="b" textLength="162.7" lengthAdjust="spacingAndGlyphs">ignoreCompareQuantity as null</text>
<text x="822.8" y="428.2" fill="#7e7e7e" textLength="266.1" lengthAdjust="spacingAndGlyphs">Skip the compare quantity check in situations where</text>
</g>
<path d="M582.5 40.8L589.6 45.2L582.5 49.6Z" fill="#fff" stroke="#0a0a0a" stroke-width="1.25"/>
<path d="M582.5 57.8L589.6 62.2L582.5 66.6Z" fill="#fff" stroke="#0a0a0a" stroke-width="1.25"/>
<path d="M582.5 74.8L589.6 79.2L582.5 83.6Z" fill="#fff" stroke="#0a0a0a" stroke-width="1.25"/>
<path d="M582.5 91.8L589.6 96.2L582.5 100.6Z" fill="#fff" stroke="#0a0a0a" stroke-width="1.25"/>
<path d="M582.5 108.8L589.6 113.2L582.5 117.6Z" fill="#fff" stroke="#0a0a0a" stroke-width="1.25"/>
<path d="M582.5 181.6L589.6 186.0L582.5 190.4Z" fill="#fff" stroke="#0a0a0a" stroke-width="1.25"/>
<path d="M582.5 221.6L589.6 226.0L582.5 230.4Z" fill="#fff" stroke="#0a0a0a" stroke-width="1.25"/>
<path d="M582.5 249.9L589.6 254.3L582.5 258.7Z" fill="#fff" stroke="#0a0a0a" stroke-width="1.25"/>
<path d="M582.5 266.9L589.6 271.3L582.5 275.7Z" fill="#fff" stroke="#0a0a0a" stroke-width="1.25"/>
<path d="M582.5 283.9L589.6 288.3L582.5 292.7Z" fill="#fff" stroke="#0a0a0a" stroke-width="1.25"/>
<path d="M582.5 368.9L589.6 373.3L582.5 377.7Z" fill="#fff" stroke="#0a0a0a" stroke-width="1.25"/>
<path d="M582.5 385.9L589.6 390.3L582.5 394.7Z" fill="#fff" stroke="#0a0a0a" stroke-width="1.25"/>
<path d="M582.5 419.9L589.6 424.3L582.5 428.7Z" fill="#fff" stroke="#0a0a0a" stroke-width="1.25"/>
<path d="M582.6 131.2L589.6 135.5L582.6 139.8Z" fill="#0a8585" stroke="#0c2424" stroke-width="1.1" stroke-linejoin="miter"/>
<path d="M582.4 130.7V140.3" stroke="#111" stroke-width="1.5"/>
<path d="M582.6 153.1L589.6 157.4L582.6 161.7Z" fill="#0a8585" stroke="#0c2424" stroke-width="1.1" stroke-linejoin="miter"/>
<path d="M582.4 152.6V162.2" stroke="#111" stroke-width="1.5"/>
<path d="M582.6 301.1L589.6 305.4L582.6 309.7Z" fill="#0a8585" stroke="#0c2424" stroke-width="1.1" stroke-linejoin="miter"/>
<path d="M582.4 300.6V310.2" stroke="#111" stroke-width="1.5"/>
<path d="M582.6 318.1L589.6 322.4L582.6 326.7Z" fill="#0a8585" stroke="#0c2424" stroke-width="1.1" stroke-linejoin="miter"/>
<path d="M582.4 317.6V327.2" stroke="#111" stroke-width="1.5"/>
<path d="M582.6 335.1L589.6 339.4L582.6 343.7Z" fill="#0a8585" stroke="#0c2424" stroke-width="1.1" stroke-linejoin="miter"/>
<path d="M582.4 334.6V344.2" stroke="#111" stroke-width="1.5"/>
<path d="M582.6 352.1L589.6 356.4L582.6 360.7Z" fill="#0a8585" stroke="#0c2424" stroke-width="1.1" stroke-linejoin="miter"/>
<path d="M582.4 351.6V361.2" stroke="#111" stroke-width="1.5"/>
<path d="M582.6 403.1L589.6 407.4L582.6 411.7Z" fill="#0a8585" stroke="#0c2424" stroke-width="1.1" stroke-linejoin="miter"/>
<path d="M582.4 402.6V412.2" stroke="#111" stroke-width="1.5"/>
<g clip-path="url(#cMainR)">
<path d="M944.5 36.0V487.2" stroke="#c9c9c9" stroke-width="1"/>
<path d="M953.5 36.0V470.2" stroke="#c9c9c9" stroke-width="1"/>
<path d="M962.5 68.5V453.2" stroke="#c9c9c9" stroke-width="1"/>
<path d="M971.5 113.5V334.2" stroke="#c9c9c9" stroke-width="1"/>
<path d="M980.5 244.5V256.2" stroke="#c9c9c9" stroke-width="1"/>
<path d="M989.5 261.5V317.2" stroke="#c9c9c9" stroke-width="1"/>
<path d="M971.5 356.5V368.2" stroke="#c9c9c9" stroke-width="1"/>
<path d="M980.5 373.5V436.2" stroke="#c9c9c9" stroke-width="1"/>
<path d="M953.5 492.5V504.2" stroke="#c9c9c9" stroke-width="1"/>
<path d="M962.5 509.5V591.0" stroke="#c9c9c9" stroke-width="1"/>
<text x="1159.0" y="39.2" fill="#7e7e7e" textLength="66.2" lengthAdjust="spacingAndGlyphs">the mutation</text>
<text x="970.8" y="54.2" fill="#1b87e0" font-size="12" textLength="12" lengthAdjust="spacing" stroke="#1b87e0" stroke-width="0.45">{ }</text>
<text x="986.0" y="55.1" class="b" textLength="168.0" lengthAdjust="spacingAndGlyphs">inventorySetQuantities as object</text>
<text x="1159.1" y="55.1" fill="#7e7e7e" textLength="245.2" lengthAdjust="spacingAndGlyphs">InventorySetQuantitiesPayload - Return type for</text>
<text x="1159.1" y="68.1" fill="#7e7e7e" textLength="129.4" lengthAdjust="spacingAndGlyphs">concurrent requests from</text>
<text x="1159.1" y="81.1" fill="#7e7e7e" textLength="68.7" lengthAdjust="spacingAndGlyphs">the mutation.</text>
<path d="M958.5 61.0l4.1 4l4.1 -4" fill="none" stroke="#1a1a1a" stroke-width="1.5"/>
<text x="983.0" y="95.5" fill="#1b87e0" font-size="11.6" textLength="7.4" lengthAdjust="spacingAndGlyphs" stroke="#1b87e0" stroke-width="0.3">Ø</text>
<text x="994.8" y="95.2" class="b" textLength="180.7" lengthAdjust="spacingAndGlyphs">inventoryAdjustmentGroup as null</text>
<text x="1180.6" y="95.2" fill="#7e7e7e" textLength="139.4" lengthAdjust="spacingAndGlyphs">InventoryAdjustmentGroup</text>
<path d="M967.7 106.4l4.1 4l4.1 -4" fill="none" stroke="#1a1a1a" stroke-width="1.5"/>
<text x="979.6" y="111.2" fill="#1b87e0" font-size="12" textLength="12" lengthAdjust="spacing" stroke="#1b87e0" stroke-width="0.45">{ }</text>
<text x="994.8" y="112.1" class="b" textLength="192.6" lengthAdjust="spacingAndGlyphs">inventoryAdjustmentGroup as object</text>
<text x="1192.5" y="112.1" fill="#7e7e7e" textLength="139.4" lengthAdjust="spacingAndGlyphs">InventoryAdjustmentGroup</text>
<text x="988.4" y="128.2" fill="#1b87e0" font-size="8.4" textLength="14.6" lengthAdjust="spacingAndGlyphs" stroke="#1b87e0" stroke-width="0.25">"AB"</text>
<text x="1003.8" y="129.1" class="b" textLength="50.3" lengthAdjust="spacingAndGlyphs">createdAt</text>
<text x="1059.2" y="129.1" fill="#7e7e7e" textLength="256.3" lengthAdjust="spacingAndGlyphs">DateTime - Represents an ISO 8601-encoded date</text>
<text x="988.4" y="145.2" fill="#1b87e0" font-size="8.4" textLength="14.6" lengthAdjust="spacingAndGlyphs" stroke="#1b87e0" stroke-width="0.25">"AB"</text>
<text x="1003.8" y="146.1" class="b" textLength="34.6" lengthAdjust="spacingAndGlyphs">reason</text>
<text x="1043.5" y="146.1" fill="#7e7e7e" textLength="250.7" lengthAdjust="spacingAndGlyphs">String - The reason for the group of adjustments.</text>
<text x="988.4" y="162.2" fill="#1b87e0" font-size="8.4" textLength="14.6" lengthAdjust="spacingAndGlyphs" stroke="#1b87e0" stroke-width="0.25">"AB"</text>
<text x="1003.8" y="163.1" class="b" textLength="163.4" lengthAdjust="spacingAndGlyphs">referenceDocumentUri as string</text>
<text x="1172.3" y="163.1" fill="#7e7e7e" textLength="240.9" lengthAdjust="spacingAndGlyphs">String - A freeform URI that represents why the</text>
<text x="1172.3" y="176.1" fill="#7e7e7e" textLength="141.9" lengthAdjust="spacingAndGlyphs">quantities or their reference</text>
<text x="1172.3" y="189.1" fill="#7e7e7e" textLength="88.5" lengthAdjust="spacingAndGlyphs">draft order might</text>
<text x="992.0" y="203.4" fill="#1b87e0" font-size="11.6" textLength="7.4" lengthAdjust="spacingAndGlyphs" stroke="#1b87e0" stroke-width="0.3">Ø</text>
<text x="1003.8" y="203.1" class="b" textLength="153.9" lengthAdjust="spacingAndGlyphs">referenceDocumentUri as null</text>
<text x="1162.8" y="203.1" fill="#7e7e7e" textLength="240.9" lengthAdjust="spacingAndGlyphs">String - A freeform URI that represents why the</text>
<text x="1162.8" y="216.1" fill="#7e7e7e" textLength="141.9" lengthAdjust="spacingAndGlyphs">quantities or their reference</text>
<text x="1162.8" y="229.1" fill="#7e7e7e" textLength="88.5" lengthAdjust="spacingAndGlyphs">draft order might</text>
<path d="M976.7 237.4l4.1 4l4.1 -4" fill="none" stroke="#1a1a1a" stroke-width="1.5"/>
<path d="M993.4 234.9h-3.4v8.6h3.4M996.8 234.9h3.4v8.6h-3.4" fill="none" stroke="#1b87e0" stroke-width="1.9"/>
<text x="1003.8" y="243.1" class="b" textLength="43.3" lengthAdjust="spacingAndGlyphs">changes</text>
<text x="1052.2" y="243.1" fill="#7e7e7e" textLength="192.1" lengthAdjust="spacingAndGlyphs">The set of inventory quantity changes</text>
<path d="M985.7 254.4l4.1 4l4.1 -4" fill="none" stroke="#1a1a1a" stroke-width="1.5"/>
<text x="997.6" y="259.2" fill="#1b87e0" font-size="12" textLength="12" lengthAdjust="spacing" stroke="#1b87e0" stroke-width="0.45">{ }</text>
<text x="1012.8" y="260.1" class="i" textLength="29.3" lengthAdjust="spacingAndGlyphs">object</text>
<text x="1047.2" y="260.1" fill="#7e7e7e" textLength="204.1" lengthAdjust="spacingAndGlyphs">InventoryChange - Represents a change</text>
<text x="1006.4" y="276.1" fill="#1b87e0" font-size="8.4" textLength="14.6" lengthAdjust="spacingAndGlyphs" stroke="#1b87e0" stroke-width="0.25">"AB"</text>
<text x="1021.8" y="277.0" class="b" textLength="29.4" lengthAdjust="spacingAndGlyphs">name</text>
<text x="1056.3" y="277.0" fill="#7e7e7e" textLength="255.4" lengthAdjust="spacingAndGlyphs">String - The [name](https://shopify.dev/docs/apps</text>
<text x="1056.3" y="290.0" fill="#7e7e7e" textLength="222.1" lengthAdjust="spacingAndGlyphs">of the inventory quantity that was changed.</text>
<text x="1009.6" y="304.2" fill="#1b87e0" font-size="11.5" textLength="7.6" lengthAdjust="spacingAndGlyphs">#</text>
<text x="1021.8" y="304.1" class="b" textLength="26.0" lengthAdjust="spacingAndGlyphs">delta</text>
<text x="1052.9" y="304.1" fill="#7e7e7e" textLength="250.6" lengthAdjust="spacingAndGlyphs">Int - The amount by which the inventory quantity</text>
<path d="M996.3 313.3l4 3.9l-4 3.9" fill="none" stroke="#4a4a4a" stroke-width="1.6"/>
<text x="1005.2" y="320.3" fill="#1b87e0" font-size="12" textLength="15.6" lengthAdjust="spacing" stroke="#1b87e0" stroke-width="0.25">{ }</text>
<rect x="1010.8" y="315.3" width="4.6" height="3.8" fill="#b4d8f6" stroke="#1b87e0" stroke-width="1.3"/>
<text x="1021.8" y="321.1" class="i" textLength="99.1" lengthAdjust="spacingAndGlyphs">property (additional)</text>
<path d="M978.3 330.3l4 3.9l-4 3.9" fill="none" stroke="#4a4a4a" stroke-width="1.6"/>
<text x="987.2" y="337.3" fill="#1b87e0" font-size="12" textLength="15.6" lengthAdjust="spacing" stroke="#1b87e0" stroke-width="0.25">{ }</text>
<rect x="992.8" y="332.3" width="4.6" height="3.8" fill="#b4d8f6" stroke="#1b87e0" stroke-width="1.3"/>
<text x="1003.8" y="338.1" class="i" textLength="99.1" lengthAdjust="spacingAndGlyphs">property (additional)</text>
<path d="M967.7 349.4l4.1 4l4.1 -4" fill="none" stroke="#1a1a1a" stroke-width="1.5"/>
<path d="M984.4 346.9h-3.4v8.6h3.4M987.8 346.9h3.4v8.6h-3.4" fill="none" stroke="#1b87e0" stroke-width="1.9"/>
<text x="994.8" y="355.1" class="b" textLength="52.1" lengthAdjust="spacingAndGlyphs">userErrors</text>
<text x="1052.0" y="355.1" fill="#7e7e7e" textLength="182.4" lengthAdjust="spacingAndGlyphs">The list of errors that occurred from</text>
<path d="M976.7 366.4l4.1 4l4.1 -4" fill="none" stroke="#1a1a1a" stroke-width="1.5"/>
<text x="988.6" y="371.2" fill="#1b87e0" font-size="12" textLength="12" lengthAdjust="spacing" stroke="#1b87e0" stroke-width="0.45">{ }</text>
<text x="1003.8" y="372.1" class="i" textLength="29.1" lengthAdjust="spacingAndGlyphs">object</text>
<text x="1038.0" y="372.1" fill="#7e7e7e" textLength="241.0" lengthAdjust="spacingAndGlyphs">InventorySetQuantitiesUserError - An error that</text>
<text x="1001.0" y="389.4" fill="#1b87e0" font-size="11.6" textLength="7.4" lengthAdjust="spacingAndGlyphs" stroke="#1b87e0" stroke-width="0.3">Ø</text>
<text x="1012.8" y="389.1" class="b" textLength="59.8" lengthAdjust="spacingAndGlyphs">field as null</text>
<text x="1077.7" y="389.1" fill="#7e7e7e" textLength="196.2" lengthAdjust="spacingAndGlyphs">The path to the input field that caused</text>
<path d="M987.3 398.3l4 3.9l-4 3.9" fill="none" stroke="#4a4a4a" stroke-width="1.6"/>
<path d="M1002.4 397.9h-3.4v8.6h3.4M1005.8 397.9h3.4v8.6h-3.4" fill="none" stroke="#1b87e0" stroke-width="1.9"/>
<text x="1012.8" y="406.1" class="b" textLength="66.1" lengthAdjust="spacingAndGlyphs">field as array</text>
<text x="1084.0" y="406.1" fill="#7e7e7e" textLength="196.2" lengthAdjust="spacingAndGlyphs">The path to the input field that caused</text>
<text x="997.4" y="422.2" fill="#1b87e0" font-size="8.4" textLength="14.6" lengthAdjust="spacingAndGlyphs" stroke="#1b87e0" stroke-width="0.25">"AB"</text>
<text x="1012.8" y="423.1" class="b" textLength="44.9" lengthAdjust="spacingAndGlyphs">message</text>
<text x="1063.0" y="423.1" fill="#7e7e7e" textLength="138.5" lengthAdjust="spacingAndGlyphs">String - The error message.</text>
<path d="M987.3 432.3l4 3.9l-4 3.9" fill="none" stroke="#4a4a4a" stroke-width="1.6"/>
<text x="996.2" y="439.3" fill="#1b87e0" font-size="12" textLength="15.6" lengthAdjust="spacing" stroke="#1b87e0" stroke-width="0.25">{ }</text>
<rect x="1001.8" y="434.3" width="4.6" height="3.8" fill="#b4d8f6" stroke="#1b87e0" stroke-width="1.3"/>
<text x="1012.8" y="440.1" class="i" textLength="99.1" lengthAdjust="spacingAndGlyphs">property (additional)</text>
<path d="M969.3 449.3l4 3.9l-4 3.9" fill="none" stroke="#4a4a4a" stroke-width="1.6"/>
<text x="978.2" y="456.3" fill="#1b87e0" font-size="12" textLength="15.6" lengthAdjust="spacing" stroke="#1b87e0" stroke-width="0.25">{ }</text>
<rect x="983.8" y="451.3" width="4.6" height="3.8" fill="#b4d8f6" stroke="#1b87e0" stroke-width="1.3"/>
<text x="994.8" y="457.1" class="i" textLength="99.1" lengthAdjust="spacingAndGlyphs">property (additional)</text>
<path d="M960.3 466.3l4 3.9l-4 3.9" fill="none" stroke="#4a4a4a" stroke-width="1.6"/>
<text x="969.2" y="473.3" fill="#1b87e0" font-size="12" textLength="15.6" lengthAdjust="spacing" stroke="#1b87e0" stroke-width="0.25">{ }</text>
<rect x="974.8" y="468.3" width="4.6" height="3.8" fill="#b4d8f6" stroke="#1b87e0" stroke-width="1.3"/>
<text x="985.8" y="474.1" class="i" textLength="99.1" lengthAdjust="spacingAndGlyphs">property (additional)</text>
<path d="M949.7 485.4l4.1 4l4.1 -4" fill="none" stroke="#1a1a1a" stroke-width="1.5"/>
<path d="M966.4 482.9h-3.4v8.6h3.4M969.8 482.9h3.4v8.6h-3.4" fill="none" stroke="#1b87e0" stroke-width="1.9"/>
<text x="976.8" y="491.1" class="b" textLength="30.3" lengthAdjust="spacingAndGlyphs">errors</text>
<path d="M958.7 502.4l4.1 4l4.1 -4" fill="none" stroke="#1a1a1a" stroke-width="1.5"/>
<text x="970.6" y="507.2" fill="#1b87e0" font-size="12" textLength="12" lengthAdjust="spacing" stroke="#1b87e0" stroke-width="0.45">{ }</text>
<text x="985.8" y="508.1" class="i" textLength="29.1" lengthAdjust="spacingAndGlyphs">object</text>
<text x="979.4" y="524.2" fill="#1b87e0" font-size="8.4" textLength="14.6" lengthAdjust="spacingAndGlyphs" stroke="#1b87e0" stroke-width="0.25">"AB"</text>
<text x="994.8" y="525.1" class="b" textLength="44.9" lengthAdjust="spacingAndGlyphs">message</text>
<path d="M969.3 534.3l4 3.9l-4 3.9" fill="none" stroke="#4a4a4a" stroke-width="1.6"/>
<path d="M984.4 533.9h-3.4v8.6h3.4M987.8 533.9h3.4v8.6h-3.4" fill="none" stroke="#1b87e0" stroke-width="1.9"/>
<text x="994.8" y="542.1" class="b" textLength="47.4" lengthAdjust="spacingAndGlyphs">locations</text>
<path d="M969.3 551.3l4 3.9l-4 3.9" fill="none" stroke="#4a4a4a" stroke-width="1.6"/>
<path d="M984.4 550.9h-3.4v8.6h3.4M987.8 550.9h3.4v8.6h-3.4" fill="none" stroke="#1b87e0" stroke-width="1.9"/>
<text x="994.8" y="559.1" class="b" textLength="24.1" lengthAdjust="spacingAndGlyphs">path</text>
<path d="M969.3 568.3l4 3.9l-4 3.9" fill="none" stroke="#4a4a4a" stroke-width="1.6"/>
<text x="979.6" y="575.2" fill="#1b87e0" font-size="12" textLength="12" lengthAdjust="spacing" stroke="#1b87e0" stroke-width="0.45">{ }</text>
<text x="994.8" y="576.1" class="b" textLength="56.1" lengthAdjust="spacingAndGlyphs">extensions</text>
<path d="M969.3 585.3l4 3.9l-4 3.9" fill="none" stroke="#4a4a4a" stroke-width="1.6"/>
<text x="978.2" y="592.3" fill="#1b87e0" font-size="12" textLength="15.6" lengthAdjust="spacing" stroke="#1b87e0" stroke-width="0.25">{ }</text>
<rect x="983.8" y="587.3" width="4.6" height="3.8" fill="#b4d8f6" stroke="#1b87e0" stroke-width="1.3"/>
<text x="994.8" y="593.1" class="i" textLength="99.1" lengthAdjust="spacingAndGlyphs">property (additional)</text>
</g>
<path d="M1216.7 58.4L1223.8 62.8L1216.7 67.2Z" fill="#fff" stroke="#0a0a0a" stroke-width="1.25"/>
<path d="M1216.7 86.9L1223.8 91.3L1216.7 95.7Z" fill="#fff" stroke="#0a0a0a" stroke-width="1.25"/>
<path d="M1216.7 103.8L1223.8 108.2L1216.7 112.6Z" fill="#fff" stroke="#0a0a0a" stroke-width="1.25"/>
<path d="M1216.7 120.8L1223.8 125.2L1216.7 129.6Z" fill="#fff" stroke="#0a0a0a" stroke-width="1.25"/>
<path d="M1216.7 137.8L1223.8 142.2L1216.7 146.6Z" fill="#fff" stroke="#0a0a0a" stroke-width="1.25"/>
<path d="M1216.7 166.2L1223.8 170.6L1216.7 175.0Z" fill="#fff" stroke="#0a0a0a" stroke-width="1.25"/>
<path d="M1216.7 206.2L1223.8 210.6L1216.7 215.0Z" fill="#fff" stroke="#0a0a0a" stroke-width="1.25"/>
<path d="M1216.7 234.8L1223.8 239.2L1216.7 243.6Z" fill="#fff" stroke="#0a0a0a" stroke-width="1.25"/>
<path d="M1216.7 346.8L1223.8 351.2L1216.7 355.6Z" fill="#fff" stroke="#0a0a0a" stroke-width="1.25"/>
<path d="M1216.7 363.8L1223.8 368.2L1216.7 372.6Z" fill="#fff" stroke="#0a0a0a" stroke-width="1.25"/>
<path d="M1216.7 380.8L1223.8 385.2L1216.7 389.6Z" fill="#fff" stroke="#0a0a0a" stroke-width="1.25"/>
<path d="M1216.7 482.8L1223.8 487.2L1216.7 491.6Z" fill="#fff" stroke="#0a0a0a" stroke-width="1.25"/>
<path d="M1216.7 499.8L1223.8 504.2L1216.7 508.6Z" fill="#fff" stroke="#0a0a0a" stroke-width="1.25"/>
<path d="M1216.7 516.8L1223.8 521.2L1216.7 525.6Z" fill="#fff" stroke="#0a0a0a" stroke-width="1.25"/>
<path d="M1216.7 315.8L1223.8 319.8L1216.7 324.2Z" fill="#c4c4c4" stroke="#111" stroke-width="1.15"/>
<path d="M1216.7 312.8L1223.8 317.2L1216.7 321.6Z" fill="#fff" stroke="#0a0a0a" stroke-width="1.25"/>
<path d="M1216.7 332.8L1223.8 336.8L1216.7 341.2Z" fill="#c4c4c4" stroke="#111" stroke-width="1.15"/>
<path d="M1216.7 329.8L1223.8 334.2L1216.7 338.6Z" fill="#fff" stroke="#0a0a0a" stroke-width="1.25"/>
<path d="M1216.7 400.8L1223.8 404.8L1216.7 409.2Z" fill="#c4c4c4" stroke="#111" stroke-width="1.15"/>
<path d="M1216.7 397.8L1223.8 402.2L1216.7 406.6Z" fill="#fff" stroke="#0a0a0a" stroke-width="1.25"/>
<path d="M1216.7 434.8L1223.8 438.8L1216.7 443.2Z" fill="#c4c4c4" stroke="#111" stroke-width="1.15"/>
<path d="M1216.7 431.8L1223.8 436.2L1216.7 440.6Z" fill="#fff" stroke="#0a0a0a" stroke-width="1.25"/>
<path d="M1216.7 451.8L1223.8 455.8L1216.7 460.2Z" fill="#c4c4c4" stroke="#111" stroke-width="1.15"/>
<path d="M1216.7 448.8L1223.8 453.2L1216.7 457.6Z" fill="#fff" stroke="#0a0a0a" stroke-width="1.25"/>
<path d="M1216.7 468.8L1223.8 472.8L1216.7 477.2Z" fill="#c4c4c4" stroke="#111" stroke-width="1.15"/>
<path d="M1216.7 465.8L1223.8 470.2L1216.7 474.6Z" fill="#fff" stroke="#0a0a0a" stroke-width="1.25"/>
<path d="M1216.7 536.8L1223.8 540.8L1216.7 545.2Z" fill="#c4c4c4" stroke="#111" stroke-width="1.15"/>
<path d="M1216.7 533.8L1223.8 538.2L1216.7 542.6Z" fill="#fff" stroke="#0a0a0a" stroke-width="1.25"/>
<path d="M1216.7 553.8L1223.8 557.8L1216.7 562.2Z" fill="#c4c4c4" stroke="#111" stroke-width="1.15"/>
<path d="M1216.7 550.8L1223.8 555.2L1216.7 559.6Z" fill="#fff" stroke="#0a0a0a" stroke-width="1.25"/>
<path d="M1216.7 570.8L1223.8 574.8L1216.7 579.2Z" fill="#c4c4c4" stroke="#111" stroke-width="1.15"/>
<path d="M1216.7 567.8L1223.8 572.2L1216.7 576.6Z" fill="#fff" stroke="#0a0a0a" stroke-width="1.25"/>
<path d="M1216.8 252.0L1223.8 256.3L1216.8 260.6Z" fill="#0a8585" stroke="#0c2424" stroke-width="1.1" stroke-linejoin="miter"/>
<path d="M1216.6 251.5V261.1" stroke="#111" stroke-width="1.5"/>
<path d="M1216.8 273.9L1223.8 278.2L1216.8 282.5Z" fill="#0a8585" stroke="#0c2424" stroke-width="1.1" stroke-linejoin="miter"/>
<path d="M1216.6 273.4V283.0" stroke="#111" stroke-width="1.5"/>
<path d="M1216.8 295.8L1223.8 300.1L1216.8 304.4Z" fill="#0a8585" stroke="#0c2424" stroke-width="1.1" stroke-linejoin="miter"/>
<path d="M1216.6 295.3V304.9" stroke="#111" stroke-width="1.5"/>
<path d="M1216.8 415.0L1223.8 419.3L1216.8 423.6Z" fill="#0a8585" stroke="#0c2424" stroke-width="1.1" stroke-linejoin="miter"/>
<path d="M1216.6 414.5V424.1" stroke="#111" stroke-width="1.5"/>
<path d="M1212.1 590.5l6.4 -6.4M1214.3 590.5l4.2 -4.2M1216.5 590.5l2 -2" stroke="#a2a2a2" stroke-width="0.9"/>
<rect x="1292.5" y="277.5" width="272" height="275" fill="#fff" stroke="#5c5c5c"/>
<rect x="1293" y="278" width="271" height="19.6" fill="#e9f0fb"/>
<g fill="none" stroke="#1b87e0" stroke-width="1"><rect x="1298.5" y="286" width="2.2" height="2.6"/><rect x="1303.7" y="282.6" width="2.2" height="2"/><rect x="1303.7" y="286.4" width="2.2" height="2"/><rect x="1303.7" y="290.3" width="2.2" height="2"/><path d="M1300.7 287.4h3M1302.2 283.6v7.7M1302.2 283.6h1.5M1302.2 291.3h1.5"/></g>
<text x="1313.2" y="293.0" textLength="113.2" lengthAdjust="spacingAndGlyphs">SetQuantitiesChanges</text>
<path d="M1302.5 312.5V324.3" stroke="#c9c9c9" stroke-width="1"/>
<path d="M1311.5 329.5V341.3" stroke="#c9c9c9" stroke-width="1"/>
<path d="M1320.5 346.5V494.3" stroke="#c9c9c9" stroke-width="1"/>
<path d="M1329.5 431.5V460.3" stroke="#c9c9c9" stroke-width="1"/>
<path d="M1298.1 305.5l4.1 4l4.1 -4" fill="none" stroke="#1a1a1a" stroke-width="1.5"/>
<path d="M1314 299.7h9.3v14.8h-12.6v-11.5z" fill="#fff" stroke="#333" stroke-width="1.2"/>
<path d="M1314 299.7v3.3h-3.3" fill="none" stroke="#555" stroke-width="0.9"/>
<text x="1326.2" y="311.2" class="b" textLength="159.4" lengthAdjust="spacingAndGlyphs">File: SetQuantitiesChanges.xml</text>
<rect x="1491.4" y="300.3" width="58.2" height="13.6" rx="2.2" fill="#dcdcdc" stroke="#b4b4b4" stroke-width="0.8"/>
<text x="1494.8" y="311.2" textLength="51.4" lengthAdjust="spacingAndGlyphs">File/String</text>
<path d="M1307.9 322.5l4.1 4l4.1 -4" fill="none" stroke="#1a1a1a" stroke-width="1.5"/>
<path d="M1324.0 319.3l-4.6 5l4.6 5M1328.0 319.3l4.6 5l-4.6 5" fill="none" stroke="#1b87e0" stroke-width="1.75"/>
<text x="1335.0" y="328.2" class="b" textLength="44.4" lengthAdjust="spacingAndGlyphs">Changes</text>
<text x="1385.2" y="328.2" fill="#7e7e7e" textLength="164.3" lengthAdjust="spacingAndGlyphs">Result of inventorySetQuantities</text>
<path d="M1316.9 339.5l4.1 4l4.1 -4" fill="none" stroke="#1a1a1a" stroke-width="1.5"/>
<path d="M1333.0 336.3l-4.6 5l4.6 5M1337.0 336.3l4.6 5l-4.6 5" fill="none" stroke="#1b87e0" stroke-width="1.75"/>
<text x="1344.0" y="345.2" class="b" textLength="39.4" lengthAdjust="spacingAndGlyphs">Change</text>
<path d="M1342.0 353.3l-4.6 5l4.6 5M1346.0 353.3l4.6 5l-4.6 5" fill="none" stroke="#1b87e0" stroke-width="1.75"/>
<text x="1353.0" y="362.2" class="b" textLength="48.4" lengthAdjust="spacingAndGlyphs">DateTime</text>
<path d="M1342.0 370.3l-4.6 5l4.6 5M1346.0 370.3l4.6 5l-4.6 5" fill="none" stroke="#1b87e0" stroke-width="1.75"/>
<text x="1353.0" y="379.2" class="b" textLength="41.8" lengthAdjust="spacingAndGlyphs">Barcode</text>
<path d="M1342.0 387.3l-4.6 5l4.6 5M1346.0 387.3l4.6 5l-4.6 5" fill="none" stroke="#1b87e0" stroke-width="1.75"/>
<text x="1353.0" y="396.2" class="b" textLength="84.4" lengthAdjust="spacingAndGlyphs">InventoryItemID</text>
<path d="M1342.0 404.3l-4.6 5l4.6 5M1346.0 404.3l4.6 5l-4.6 5" fill="none" stroke="#1b87e0" stroke-width="1.75"/>
<text x="1353.0" y="413.2" class="b" textLength="19.4" lengthAdjust="spacingAndGlyphs">Qty</text>
<path d="M1325.9 424.5l4.1 4l4.1 -4" fill="none" stroke="#1a1a1a" stroke-width="1.5"/>
<path d="M1342.0 421.3l-4.6 5l4.6 5M1346.0 421.3l4.6 5l-4.6 5" fill="none" stroke="#1b87e0" stroke-width="1.75"/>
<text x="1353.0" y="430.2" class="b" textLength="32.4" lengthAdjust="spacingAndGlyphs">Result</text>
<path d="M1351.0 438.3l-4.6 5l4.6 5M1355.0 438.3l4.6 5l-4.6 5" fill="none" stroke="#1b87e0" stroke-width="1.75"/>
<text x="1362.0" y="447.2" class="b" textLength="31.4" lengthAdjust="spacingAndGlyphs">Name</text>
<path d="M1351.0 455.3l-4.6 5l4.6 5M1355.0 455.3l4.6 5l-4.6 5" fill="none" stroke="#1b87e0" stroke-width="1.75"/>
<text x="1362.0" y="464.2" class="b" textLength="27.4" lengthAdjust="spacingAndGlyphs">Delta</text>
<path d="M1342.0 472.3l-4.6 5l4.6 5M1346.0 472.3l4.6 5l-4.6 5" fill="none" stroke="#1b87e0" stroke-width="1.75"/>
<text x="1353.0" y="481.2" class="b" textLength="25.4" lengthAdjust="spacingAndGlyphs">Error</text>
<path d="M1342.0 489.3l-4.6 5l4.6 5M1346.0 489.3l4.6 5l-4.6 5" fill="none" stroke="#1b87e0" stroke-width="1.75"/>
<text x="1353.0" y="498.2" class="b" textLength="42.4" lengthAdjust="spacingAndGlyphs">Error (2)</text>
<path d="M1289.7 319.9L1296.8 324.3L1289.7 328.7Z" fill="#fff" stroke="#0a0a0a" stroke-width="1.25"/>
<path d="M1289.7 336.9L1296.8 341.3L1289.7 345.7Z" fill="#fff" stroke="#0a0a0a" stroke-width="1.25"/>
<path d="M1289.8 354.0L1296.8 358.3L1289.8 362.6Z" fill="#0a8585" stroke="#0c2424" stroke-width="1.1" stroke-linejoin="miter"/>
<path d="M1289.6 353.5V363.1" stroke="#111" stroke-width="1.5"/>
<path d="M1289.8 371.0L1296.8 375.3L1289.8 379.6Z" fill="#0a8585" stroke="#0c2424" stroke-width="1.1" stroke-linejoin="miter"/>
<path d="M1289.6 370.5V380.1" stroke="#111" stroke-width="1.5"/>
<path d="M1289.8 388.0L1296.8 392.3L1289.8 396.6Z" fill="#0a8585" stroke="#0c2424" stroke-width="1.1" stroke-linejoin="miter"/>
<path d="M1289.6 387.5V397.1" stroke="#111" stroke-width="1.5"/>
<path d="M1289.8 405.0L1296.8 409.3L1289.8 413.6Z" fill="#0a8585" stroke="#0c2424" stroke-width="1.1" stroke-linejoin="miter"/>
<path d="M1289.6 404.5V414.1" stroke="#111" stroke-width="1.5"/>
<path d="M1289.8 422.0L1296.8 426.3L1289.8 430.6Z" fill="#0a8585" stroke="#0c2424" stroke-width="1.1" stroke-linejoin="miter"/>
<path d="M1289.6 421.5V431.1" stroke="#111" stroke-width="1.5"/>
<path d="M1289.8 439.0L1296.8 443.3L1289.8 447.6Z" fill="#0a8585" stroke="#0c2424" stroke-width="1.1" stroke-linejoin="miter"/>
<path d="M1289.6 438.5V448.1" stroke="#111" stroke-width="1.5"/>
<path d="M1289.8 456.0L1296.8 460.3L1289.8 464.6Z" fill="#0a8585" stroke="#0c2424" stroke-width="1.1" stroke-linejoin="miter"/>
<path d="M1289.6 455.5V465.1" stroke="#111" stroke-width="1.5"/>
<path d="M1289.8 473.0L1296.8 477.3L1289.8 481.6Z" fill="#0a8585" stroke="#0c2424" stroke-width="1.1" stroke-linejoin="miter"/>
<path d="M1289.6 472.5V482.1" stroke="#111" stroke-width="1.5"/>
<path d="M1289.8 490.0L1296.8 494.3L1289.8 498.6Z" fill="#0a8585" stroke="#0c2424" stroke-width="1.1" stroke-linejoin="miter"/>
<path d="M1289.6 489.5V499.1" stroke="#111" stroke-width="1.5"/>
<path d="M1561.7 302.9L1568.8 307.3L1561.7 311.7Z" fill="#fff" stroke="#0a0a0a" stroke-width="1.25"/>
<path d="M1561.7 319.9L1568.8 324.3L1561.7 328.7Z" fill="#fff" stroke="#0a0a0a" stroke-width="1.25"/>
<path d="M1561.7 336.9L1568.8 341.3L1561.7 345.7Z" fill="#fff" stroke="#0a0a0a" stroke-width="1.25"/>
<path d="M1561.7 353.9L1568.8 358.3L1561.7 362.7Z" fill="#fff" stroke="#0a0a0a" stroke-width="1.25"/>
<path d="M1561.7 370.9L1568.8 375.3L1561.7 379.7Z" fill="#fff" stroke="#0a0a0a" stroke-width="1.25"/>
<path d="M1561.7 387.9L1568.8 392.3L1561.7 396.7Z" fill="#fff" stroke="#0a0a0a" stroke-width="1.25"/>
<path d="M1561.7 404.9L1568.8 409.3L1561.7 413.7Z" fill="#fff" stroke="#0a0a0a" stroke-width="1.25"/>
<path d="M1561.7 421.9L1568.8 426.3L1561.7 430.7Z" fill="#fff" stroke="#0a0a0a" stroke-width="1.25"/>
<path d="M1561.7 438.9L1568.8 443.3L1561.7 447.7Z" fill="#fff" stroke="#0a0a0a" stroke-width="1.25"/>
<path d="M1561.7 455.9L1568.8 460.3L1561.7 464.7Z" fill="#fff" stroke="#0a0a0a" stroke-width="1.25"/>
<path d="M1561.7 472.9L1568.8 477.3L1561.7 481.7Z" fill="#fff" stroke="#0a0a0a" stroke-width="1.25"/>
<path d="M1557.1 551.5l6.4 -6.4M1559.3 551.5l4.2 -4.2M1561.5 551.5l2 -2" stroke="#a2a2a2" stroke-width="0.9"/>
</svg></body></html>
